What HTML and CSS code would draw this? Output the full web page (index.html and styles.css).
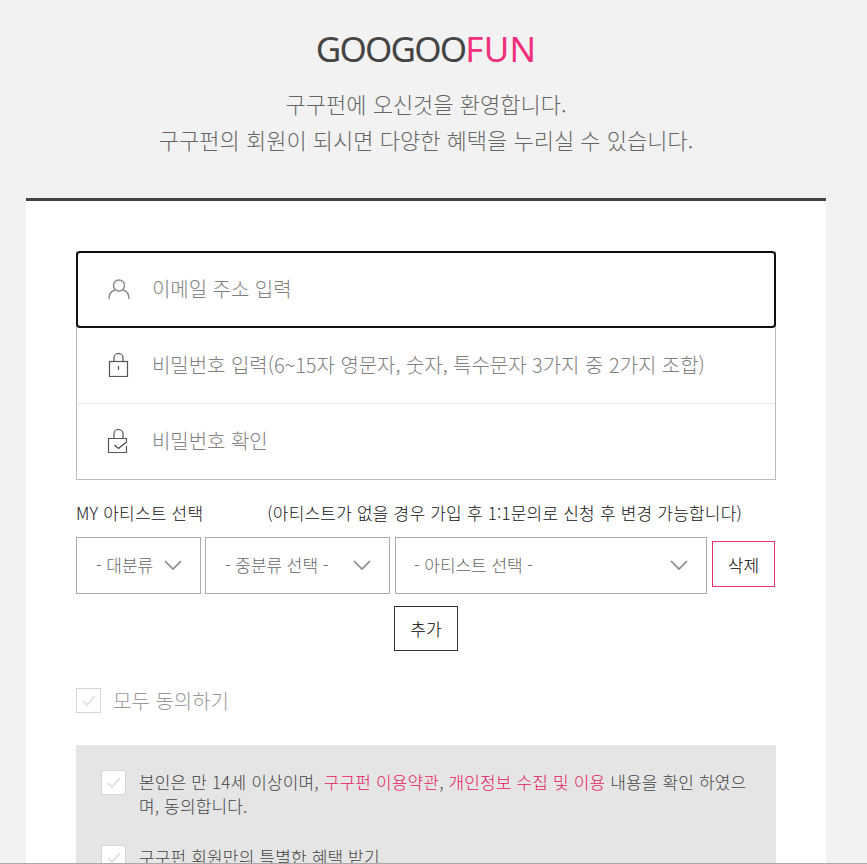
FILE: index.html
```html
<!DOCTYPE html>
<html lang="ko">
<head>
    <meta charset="UTF-8">
    <meta name="viewport" content="width=device-width, initial-scale=1.0">
    <title>GOOGOOFUN 회원가입</title>
    <link rel="stylesheet" href="styles.css">
</head>
<body>
<div class="page">

    <header class="join-head">
        <h1 class="logo">GOOGOO<span>FUN</span></h1>
        <p>구구펀에 오신것을 환영합니다.<br>구구펀의 회원이 되시면 다양한 혜택을 누리실 수 있습니다.</p>
    </header>

    <main class="card">
        <!-- Account fields -->
        <div class="fields">
            <label class="field field-active">
                <svg class="field-icon" width="24" height="24" viewBox="0 0 24 24" fill="none" stroke="#888" stroke-width="1.4">
                    <circle cx="13" cy="8.500" r="5.500"/>
                    <path d="M3 22c0-5 2.500-8 6-9M23 22c0-5-2.500-8-6-9"/>
                </svg>
                <input type="text" placeholder="이메일 주소 입력">
            </label>
            <label class="field field-pass">
                <svg class="field-icon" width="24" height="24" viewBox="0 0 24 24" fill="none" stroke="#555" stroke-width="1.2">
                    <rect x="3.500" y="8.500" width="18" height="15"/>
                    <path d="M8 8.500V4.500a4.500 4 0 0 1 9 0v4M12.500 13v4"/>
                </svg>
                <input type="password" placeholder="비밀번호 입력(6~15자 영문자, 숫자, 특수문자 3가지 중 2가지 조합)">
            </label>
            <label class="field">
                <svg class="field-icon" width="24" height="24" viewBox="0 0 24 24" fill="none" stroke="#555" stroke-width="1.2">
                    <path d="M20.500 12V9.500H2.500v14h18V17"/>
                    <path d="M8 9.500V4.500a4.500 4 0 0 1 9 0v5"/>
                    <path d="M8.500 16l4 3.500 8.500-7" stroke="#444"/>
                </svg>
                <input type="password" placeholder="비밀번호 확인">
            </label>
        </div>

        <!-- Artist select -->
        <div class="artist-label">
            <span>MY 아티스트 선택</span>
            <span>(아티스트가 없을 경우 가입 후 1:1문의로 신청 후 변경 가능합니다)</span>
        </div>
        <div class="artist-row">
            <div class="select select-large">
                <span>- 대분류</span>
                <svg width="18" height="11" viewBox="0 0 18 11" fill="none" stroke="#888" stroke-width="1.7"><path d="M1 1l8 8 8-8"/></svg>
            </div>
            <div class="select select-mid">
                <span>- 중분류 선택 -</span>
                <svg width="18" height="11" viewBox="0 0 18 11" fill="none" stroke="#888" stroke-width="1.7"><path d="M1 1l8 8 8-8"/></svg>
            </div>
            <div class="select select-artist">
                <span>- 아티스트 선택 -</span>
                <svg width="18" height="11" viewBox="0 0 18 11" fill="none" stroke="#888" stroke-width="1.7"><path d="M1 1l8 8 8-8"/></svg>
            </div>
            <button class="btn btn-delete">삭제</button>
        </div>
        <div class="add-row">
            <button class="btn btn-add">추가</button>
        </div>

        <!-- Agreements -->
        <div class="agree-all">
            <span class="check check-all">
                <svg width="16" height="13" viewBox="0 0 16 13" fill="none" stroke="#e3e3e3" stroke-width="2"><path d="M2 7l4 4 8-9"/></svg>
            </span>
            <span>모두 동의하기</span>
        </div>
        <div class="agree-box">
            <div class="agree-item">
                <span class="check">
                    <svg width="16" height="13" viewBox="0 0 16 13" fill="none" stroke="#e3e3e3" stroke-width="2"><path d="M2 7l4 4 8-9"/></svg>
                </span>
                <p>본인은 만 14세 이상이며, <em>구구펀 이용약관</em>, <em>개인정보 수집 및 이용</em> 내용을 확인 하였으며, 동의합니다.</p>
            </div>
            <div class="agree-item">
                <span class="check">
                    <svg width="16" height="13" viewBox="0 0 16 13" fill="none" stroke="#e3e3e3" stroke-width="2"><path d="M2 7l4 4 8-9"/></svg>
                </span>
                <p>구구펀 회원만의 특별한 혜택 받기</p>
            </div>
        </div>
    </main>

</div>
</body>
</html>
```

FILE: styles.css
```css
html, body {
    margin: 0;
    padding: 0;
}

body {
    font-family: "Noto Sans CJK KR", "Noto Sans", sans-serif;
    font-weight: 300;
    background: #f2f2f2;
    color: #333;
}

.page {
    height: 864px;
    box-sizing: border-box;
    overflow: hidden;
    border-bottom: 1px solid #aaa;
}

/* Header */
.join-head {
    height: 198px;
    box-sizing: border-box;
    padding: 24px 15px 0 0;
    text-align: center;
    color: #666;
}

.logo {
    margin: 0;
    height: 50px;
    font-family: "Noto Sans", sans-serif;
    font-size: 35px;
    line-height: 50px;
    font-weight: 400;
    letter-spacing: -1.8px;
    color: #444;
}

.logo span {
    letter-spacing: 0.2px;
    color: #f0307c;
}

.join-head p {
    margin: 11px 0 0;
    font-size: 22px;
    line-height: 36px;
}

/* Card */
.card {
    width: 800px;
    margin-left: 26px;
    box-sizing: border-box;
    height: 700px;
    padding: 50px 50px 0;
    background: #fff;
    border-top: 3px solid #444;
}

.fields {
    border: 1px solid #bbb;
    border-top: none;
    height: 229px;
    box-sizing: border-box;
}

.field {
    display: flex;
    align-items: center;
    height: 76px;
    box-sizing: border-box;
    padding-left: 29px;
    border-top: 1px solid #e6e6e6;
}

.field-active {
    height: 77px;
    margin: 0 -1px;
    padding-left: 28px;
    border: 2px solid #111;
    border-radius: 4px;
}

.field-pass {
    height: 75px;
    border-top: none;
}

.field-icon {
    flex-shrink: 0;
    margin: 0 22px 2px 0;
}

.field input {
    flex: 1;
    border: none;
    outline: none;
    padding: 0 0 3px;
    background: none;
    font-family: inherit;
    font-weight: 300;
    font-size: 20px;
    letter-spacing: -0.05px;
}

.field input::placeholder {
    color: #808080;
    opacity: 1;
}

/* Artist select */
.artist-label {
    display: flex;
    gap: 64px;
    margin-top: 20px;
    height: 26px;
    font-size: 17px;
    line-height: 26px;
    letter-spacing: 0.2px;
    color: #111;
}

.artist-row {
    display: flex;
    align-items: flex-start;
    gap: 4px;
    margin-top: 11px;
}

.select {
    display: flex;
    align-items: center;
    justify-content: space-between;
    height: 57px;
    box-sizing: border-box;
    padding: 0 18px 0 19px;
    border: 1px solid #aaa;
    font-size: 17px;
    letter-spacing: -0.05px;
    color: #666;
}

.select span {
    margin-bottom: 2px;
}

.select-large {
    width: 125px;
}

.select-mid {
    width: 185px;
}

.select-artist {
    width: 312px;
    margin-left: 1px;
    padding-left: 18px;
}

.btn {
    background: #fff;
    box-sizing: border-box;
    padding: 0;
    font-family: inherit;
    font-weight: 300;
    font-size: 17px;
    color: #000;
    cursor: pointer;
}

.btn-delete {
    width: 63px;
    height: 46px;
    margin: 4px 0 0 1px;
    border: 1px solid #f0307c;
}

.add-row {
    display: flex;
    justify-content: center;
    margin-top: 12px;
}

.btn-add {
    width: 64px;
    height: 45px;
    border: 1px solid #333;
}

/* Agreements */
.agree-all {
    display: flex;
    align-items: center;
    gap: 12px;
    margin-top: 35px;
    height: 28px;
    font-size: 20px;
    color: #999;
}

.check {
    display: flex;
    align-items: center;
    justify-content: center;
    flex-shrink: 0;
    width: 25px;
    height: 25px;
    box-sizing: border-box;
    background: #fff;
    border: 1px solid #d6d6d6;
}

.agree-box {
    margin-top: 31px;
    padding: 25px 25px 0;
    background: #e5e5e5;
    height: 200px;
    box-sizing: border-box;
}

.agree-item {
    display: flex;
    gap: 13px;
    margin-bottom: 27px;
}

.agree-item p {
    margin: 0;
    font-size: 17px;
    line-height: 24px;
    letter-spacing: 0.15px;
    color: #444;
}

.agree-item em {
    font-style: normal;
    color: #e6195f;
}
```
